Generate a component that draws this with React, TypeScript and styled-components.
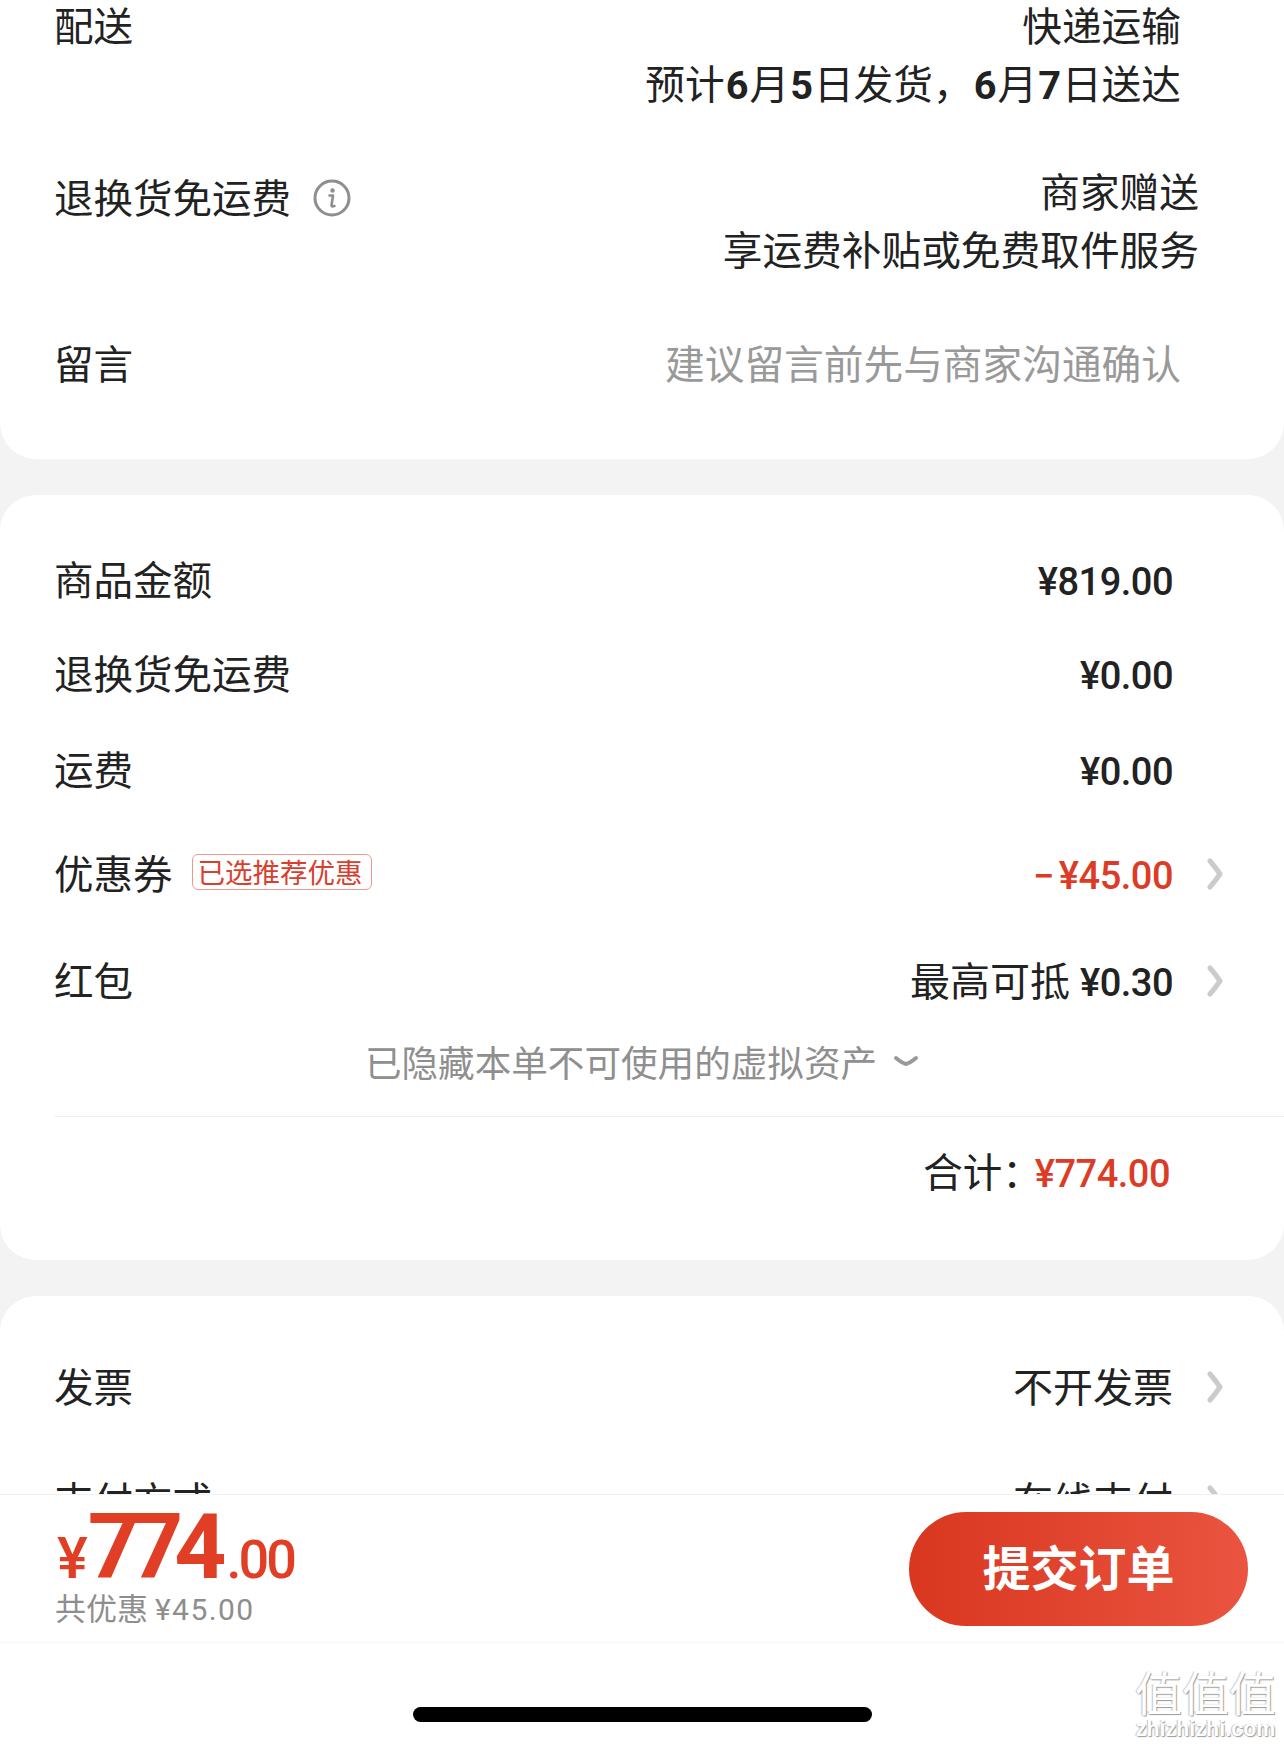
import React from "react";
import styled, { createGlobalStyle } from "styled-components";

const Global = createGlobalStyle`
  html, body { margin: 0; padding: 0; background: #f3f3f3; }
  body { font-family: "Noto Sans CJK SC", "Noto Sans", sans-serif; }
`;

const Page = styled.div`
  position: relative;
  width: 1284px;
  height: 1746px;
  overflow: hidden;
  background: #f3f3f3;
  color: #222;
`;

const Card = styled.section<{ $top?: number; $pt?: number; $pb?: number }>`
  background: #fff;
  margin-top: ${(p) => p.$top ?? 36}px;
  padding: ${(p) => p.$pt ?? 0}px 0 ${(p) => p.$pb ?? 0}px 54px;
  border-radius: 36px;
`;

const FirstCard = styled(Card)`
  border-radius: 0 0 36px 36px;
`;

const Num = styled.span`
  font-family: "Roboto", "Noto Sans", sans-serif;
  font-weight: 500;
  line-height: 1;
`;

const DateNum = styled(Num)`
  margin: 0 1px;
  font-weight: 700;
`;

const TextRow = styled.div<{ $gap?: number; $pr: number }>`
  display: flex;
  justify-content: space-between;
  align-items: flex-start;
  margin-top: ${(p) => p.$gap ?? 0}px;
  padding-right: ${(p) => p.$pr}px;
  font-size: 39.5px;
  line-height: 58px;
`;

const Label = styled.div<{ $shift?: number; $lh?: number }>`
  display: flex;
  align-items: center;
  margin-top: ${(p) => p.$shift ?? 0}px;
  ${(p) => (p.$lh ? `line-height: ${p.$lh}px;` : "")}
`;

const Lines = styled.div`
  text-align: right;
  font-size: 39.7px;
`;

/* The list is scrolled, so the top row starts right under the window edge */
const TopLine = styled.div`
  line-height: 48px;
  margin-bottom: 5px;
`;

const Hint = styled.div`
  color: #999;
  font-size: 39.7px;
`;

const InfoIcon = styled.svg`
  width: 38px;
  height: 38px;
  margin: 3px 0 0 22px;
`;

const AmountRow = styled.div<{ $h: number }>`
  display: flex;
  align-items: center;
  justify-content: space-between;
  height: ${(p) => p.$h}px;
  padding-right: 111px;
  font-size: 39.5px;
  position: relative;
`;

/* Noto sits low in its line box, so CJK runs get lifted with a bottom pad */
const Cjk = styled.span`
  display: inline-flex;
  align-items: center;
  padding-bottom: 7px;
`;

const ValueText = styled(Cjk)`
  font-size: 40px;
  gap: 10px;
  align-items: baseline;
`;

const Money = styled(Num)<{ $red?: boolean }>`
  display: inline-block;
  padding-top: 2px;
  font-size: 38px;
  letter-spacing: -0.5px;
  color: ${(p) => (p.$red ? "#dc3c26" : "#222")};
`;

const Minus = styled.span`
  margin-right: 5px;
`;

const Badge = styled.span`
  display: inline-flex;
  align-items: center;
  box-sizing: border-box;
  height: 36px;
  width: 180px;
  margin-left: 19px;
  padding-left: 5px;
  border: 1px solid #eb9a90;
  border-radius: 6px;
  color: #d8402e;
  font-size: 27.5px;
  line-height: 1;
  white-space: nowrap;
`;

const Chevron = styled.svg`
  position: absolute;
  right: 61px;
  top: 50%;
  width: 16px;
  height: 32px;
  margin-top: -17px;
`;

const HiddenNote = styled.div`
  display: flex;
  align-items: center;
  justify-content: center;
  box-sizing: border-box;
  height: 60px;
  margin-left: -54px;
  padding: 0 0 4px 0;
  color: #8f8f8f;
  font-size: 36.6px;
`;

const DownIcon = styled.svg`
  width: 26px;
  height: 12px;
  margin-left: 16px;
`;

const Divider = styled.div`
  margin-top: 23px;
  height: 1px;
  background: #f0f0f0;
`;

const TotalRow = styled.div`
  display: flex;
  align-items: center;
  justify-content: flex-end;
  height: 112px;
  padding-right: 114px;
  font-size: 39.5px;
`;

const TotalLabel = styled(Cjk)`
  margin-right: -7px;
`;

const Footer = styled.footer`
  position: absolute;
  left: 0;
  right: 0;
  bottom: 0;
  height: 252px;
  background: #fff;
  border-top: 1px solid #f1f1f1;
  box-sizing: border-box;
`;

const Bar = styled.div`
  display: flex;
  align-items: center;
  justify-content: space-between;
  box-sizing: border-box;
  height: 148px;
  padding: 0 36px 0 55px;
  border-bottom: 1px solid #f6f6f6;
`;

const PriceBlock = styled.div`
  display: flex;
  flex-direction: column;
  padding-bottom: 5px;
`;

const Price = styled.div`
  display: flex;
  align-items: baseline;
  height: 84px;
  color: #e03e25;
  font-family: "Roboto", sans-serif;
  font-weight: 700;
  line-height: 84px;
  white-space: nowrap;
`;

const PriceSign = styled.span`
  margin-left: 2px;
  font-size: 58px;
  font-weight: 500;
`;

const PriceCents = styled.span`
  font-size: 54px;
  font-weight: 500;
  letter-spacing: -3px;
`;

const PriceBig = styled.span`
  font-size: 91px;
  letter-spacing: -9px;
  margin-right: 9px;
`;

const Saved = styled.div`
  color: #8e8e8e;
  font-size: 31px;
  line-height: 36px;
`;

const SavedNum = styled.span`
  font-family: "Roboto", sans-serif;
  font-size: 30px;
  letter-spacing: 1.4px;
`;

const Submit = styled.button`
  width: 339px;
  height: 114px;
  border: 0;
  border-radius: 57px;
  background: linear-gradient(90deg, #d9371f, #ea5440);
  color: #fff;
  font-family: inherit;
  font-size: 48px;
  font-weight: 700;
  padding: 0 0 8px;
`;

const HomeBar = styled.div`
  position: absolute;
  left: 413px;
  top: 212px;
  width: 459px;
  height: 15px;
  border-radius: 8px;
  background: #000;
`;

const Mark = styled.div`
  position: absolute;
  right: 8px;
  bottom: 5px;
  text-align: center;
  white-space: nowrap;
  color: #fff;
  text-shadow: 1px 1px 1px #9a9a9a, -1px 0 1px #c4c4c4;
`;

const MarkGlyphs = styled.div`
  font-size: 47px;
  line-height: 52px;
`;

const MarkSite = styled.div`
  font-family: "Liberation Sans", sans-serif;
  font-weight: 700;
  font-size: 21.5px;
  line-height: 24px;
`;

const RightArrow = () => (
  <Chevron viewBox="0 0 16 32" fill="none" stroke="#cbcbcb" strokeWidth="5" strokeLinecap="round" strokeLinejoin="round">
    <path d="M3 3 Q 9 10 13 16 Q 9 22 3 29" />
  </Chevron>
);

export default function App() {
  return (
    <Page>
      <Global />
      <FirstCard $top={0} $pb={68}>
        <TextRow $pr={103}>
          <Label $lh={48}>配送</Label>
          <Lines>
            <TopLine>快递运输</TopLine>
            <div>
              预计<DateNum>6</DateNum>月<DateNum>5</DateNum>日发货，<DateNum>6</DateNum>月<DateNum>7</DateNum>日送达
            </div>
          </Lines>
        </TextRow>
        <TextRow $gap={50} $pr={85}>
          <Label $shift={6}>
            退换货免运费
            <InfoIcon viewBox="0 0 38 38" fill="none">
              <circle cx="19" cy="19" r="17" stroke="#8e8e8e" strokeWidth="3" />
              <circle cx="19.5" cy="11.5" r="2.2" fill="#8e8e8e" />
              <path d="M16.5 16.5 H20 L18.5 26.5 Q18.5 28 21.5 27" stroke="#8e8e8e" strokeWidth="2.6" strokeLinecap="round" strokeLinejoin="round" />
            </InfoIcon>
          </Label>
          <Lines>
            <div>商家赠送</div>
            <div>享运费补贴或免费取件服务</div>
          </Lines>
        </TextRow>
        <TextRow $gap={56} $pr={103}>
          <Label>留言</Label>
          <Hint>建议留言前先与商家沟通确认</Hint>
        </TextRow>
      </FirstCard>

      <Card $pt={40} $pb={31}>
        <AmountRow $h={92}>
          <Cjk>商品金额</Cjk>
          <Money>¥819.00</Money>
        </AmountRow>
        <AmountRow $h={96}>
          <Cjk>退换货免运费</Cjk>
          <Money>¥0.00</Money>
        </AmountRow>
        <AmountRow $h={96}>
          <Cjk>运费</Cjk>
          <Money>¥0.00</Money>
        </AmountRow>
        <AmountRow $h={112}>
          <Cjk>
            优惠券<Badge>已选推荐优惠</Badge>
          </Cjk>
          <Money $red>
            <Minus>−</Minus>¥45.00
          </Money>
          <RightArrow />
        </AmountRow>
        <AmountRow $h={102}>
          <Cjk>红包</Cjk>
          <ValueText>
            最高可抵<Money>¥0.30</Money>
          </ValueText>
          <RightArrow />
        </AmountRow>
        <HiddenNote>
          已隐藏本单不可使用的虚拟资产
          <DownIcon viewBox="0 0 26 12" fill="none" stroke="#999" strokeWidth="4" strokeLinecap="round" strokeLinejoin="round">
            <path d="M3 3 Q 9 8 13 9 Q 17 8 23 3" />
          </DownIcon>
        </HiddenNote>
        <Divider />
        <TotalRow>
          <TotalLabel>合计：</TotalLabel>
          <Money $red>¥774.00</Money>
        </TotalRow>
      </Card>

      <Card $pt={35}>
        <AmountRow $h={114}>
          <Cjk>发票</Cjk>
          <ValueText>不开发票</ValueText>
          <RightArrow />
        </AmountRow>
        <AmountRow $h={114}>
          <Cjk>支付方式</Cjk>
          <ValueText>在线支付</ValueText>
          <RightArrow />
        </AmountRow>
      </Card>

      <Footer>
        <Bar>
          <PriceBlock>
            <Price>
              <PriceSign>¥</PriceSign>
              <PriceBig>774</PriceBig>
              <PriceCents>.00</PriceCents>
            </Price>
            <Saved>
              共优惠 <SavedNum>¥45.00</SavedNum>
            </Saved>
          </PriceBlock>
          <Submit>提交订单</Submit>
        </Bar>
        <HomeBar />
        <Mark>
          <MarkGlyphs>值值值</MarkGlyphs>
          <MarkSite>zhizhizhi.com</MarkSite>
        </Mark>
      </Footer>
    </Page>
  );
}
